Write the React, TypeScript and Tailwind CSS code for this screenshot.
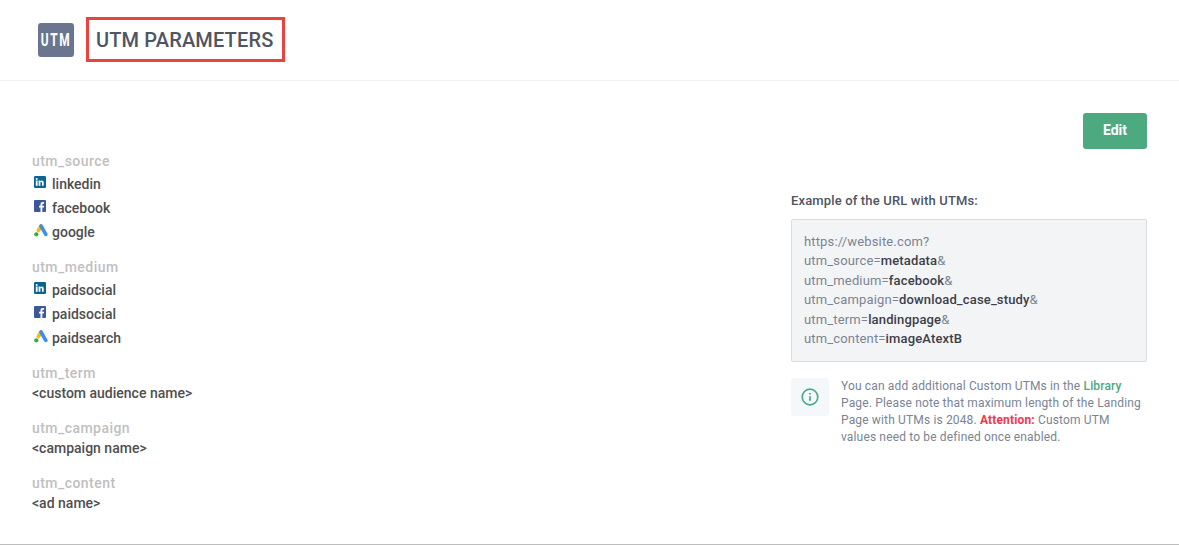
function LinkedinIcon() {
  return (
    <svg width="12" height="12" viewBox="0 0 12 12" className="block">
      <rect width="12" height="12" rx="1.2" fill="#0a6596" />
      <rect x="1.800" y="4.500" width="1.800" height="5.300" fill="#fff" />
      <circle cx="2.700" cy="2.900" r="1" fill="#fff" />
      <path d="M4.600 4.500h1.600v.7c.3-.5.8-.8 1.500-.8 1.400 0 2 .8 2 2.200v3.200H8V7c0-.7-.2-1.100-.8-1.100S6.400 6.300 6.400 7v2.800H4.600z" fill="#fff" />
    </svg>
  );
}

function FacebookIcon() {
  return (
    <svg width="12" height="12" viewBox="0 0 12 12" className="block">
      <rect width="12" height="12" rx="1" fill="#3b5998" />
      <path d="M8.300 12V7.500h1.500l.2-1.800H8.300V4.600c0-.5.200-.8.900-.8h.9V2.200C9.900 2.200 9.400 2.100 8.800 2.100c-1.400 0-2.300.8-2.300 2.300v1.300H5v1.800h1.500V12z" fill="#fff" />
    </svg>
  );
}

function GoogleAdsIcon() {
  return (
    <svg width="14" height="13" viewBox="0 0 14 13" className="block">
      <path d="M7 2 4.400 6.500" stroke="#fbbc04" strokeWidth="3.600" strokeLinecap="round" fill="none" />
      <path d="M7 2 11.800 10.400" stroke="#3f8cf0" strokeWidth="3.600" strokeLinecap="round" fill="none" />
      <circle cx="2.300" cy="10.300" r="2.100" fill="#34a853" />
    </svg>
  );
}

function SourceRow({ icon, label }: { icon: React.ReactNode; label: string }) {
  return (
    <div className="flex h-6 items-center">
      <span className="flex w-5 -translate-y-[2px] pl-[2px]">{icon}</span>
      <span className="text-sm font-medium text-[#4f4f4f]">{label}</span>
    </div>
  );
}

function Param({ label, value }: { label: string; value: string }) {
  return (
    <div className="h-10 not-first:mt-[15px]">
      <div className="text-sm leading-5 font-medium tracking-[0.45px] text-[#bfbfbf]">{label}</div>
      <div className="text-sm leading-5 font-medium text-[#4f4f4f]">{value}</div>
    </div>
  );
}

export default function App() {
  const urlParts = [
    ["utm_source=", "metadata", "&"],
    ["utm_medium=", "facebook", "&"],
    ["utm_campaign=", "download_case_study", "&"],
    ["utm_term=", "landingpage", "&"],
    ["utm_content=", "imageAtextB", ""],
  ];

  return (
    <div className="h-[545px] w-[1179px] overflow-hidden bg-white font-['Roboto',sans-serif]">
      <div className="h-[545px] border-b border-[#bdbdbd]">
        {/* Header */}
        <div className="flex h-[81px] items-center border-b border-[#eeeef3] pl-[38px]">
          <div className="flex h-[34px] w-9 items-center justify-center rounded-[3px] bg-[#6a7690] text-white">
            <span className="inline-block scale-x-[0.66] text-lg font-bold tracking-[2.500px]">UTM</span>
          </div>
          <div className="mb-[1px] ml-3 flex h-[45px] w-[199px] items-center border-[3px] border-[#e8433f] pl-[7px] text-xl font-medium tracking-[0.15px] text-[#4f5562]">
            UTM PARAMETERS
          </div>
        </div>

        <div className="flex justify-between pr-8 pl-8">
          {/* Left column */}
          <div className="pt-[70px]">
            <div className="h-[21px] text-sm leading-5 font-medium tracking-[0.45px] text-[#bfbfbf]">utm_source</div>
            <SourceRow icon={<LinkedinIcon />} label="linkedin" />
            <SourceRow icon={<FacebookIcon />} label="facebook" />
            <SourceRow icon={<GoogleAdsIcon />} label="google" />
            <div className="mt-[13px] h-[21px] text-sm leading-5 font-medium tracking-[0.45px] text-[#bfbfbf]">utm_medium</div>
            <SourceRow icon={<LinkedinIcon />} label="paidsocial" />
            <SourceRow icon={<FacebookIcon />} label="paidsocial" />
            <SourceRow icon={<GoogleAdsIcon />} label="paidsearch" />
            <div className="mt-[13px]">
              <Param label="utm_term" value="<custom audience name>" />
              <Param label="utm_campaign" value="<campaign name>" />
              <Param label="utm_content" value="<ad name>" />
            </div>
          </div>

          {/* Right column */}
          <div className="w-[356px] pt-8">
            <div className="flex justify-end">
              <button className="h-9 w-16 rounded-[3px] bg-[#4da97f] pb-[2px] text-sm font-bold text-white">Edit</button>
            </div>
            <div className="mt-[42px] text-[13px] leading-5 font-medium tracking-[0.15px] text-[#4f5562]">
              Example of the URL with UTMs:
            </div>
            <div className="mt-2 h-[143px] rounded-[2px] border border-[#d9dce3] bg-[#f3f4f6] px-3 pt-[11.5px] text-[13px] leading-[19.5px] tracking-[0.15px] text-[#7b8494]">
              <div>https://website.com?</div>
              {urlParts.map(([key, value, end]) => (
                <div key={key}>
                  {key}
                  <span className="font-medium text-[#3c4048]">{value}</span>
                  {end}
                </div>
              ))}
            </div>
            <div className="mt-4 flex">
              <div className="flex h-[38px] w-[38px] shrink-0 items-center justify-center rounded-[4px] bg-[#f4f8fb]">
                <svg width="18" height="18" viewBox="0 0 18 18" fill="none" stroke="#4da97f" strokeWidth="1.700">
                  <circle cx="9" cy="9" r="7.800" />
                  <path d="M9 8.200v4.600" strokeWidth="1.800" />
                  <path d="M9 5v1.600" strokeWidth="1.800" />
                </svg>
              </div>
              <p className="ml-3 text-xs leading-[17px] tracking-[0.15px] whitespace-nowrap text-[#7b8494]">
                You can add additional Custom UTMs in the <span className="font-medium text-[#4da97f]">Library</span>
                <br />
                Page. Please note that maximum length of the Landing
                <br />
                Page with UTMs is 2048. <span className="font-bold text-[#f2374d]">Attention:</span> Custom UTM
                <br />
                values need to be defined once enabled.
              </p>
            </div>
          </div>
        </div>
      </div>
    </div>
  );
}
